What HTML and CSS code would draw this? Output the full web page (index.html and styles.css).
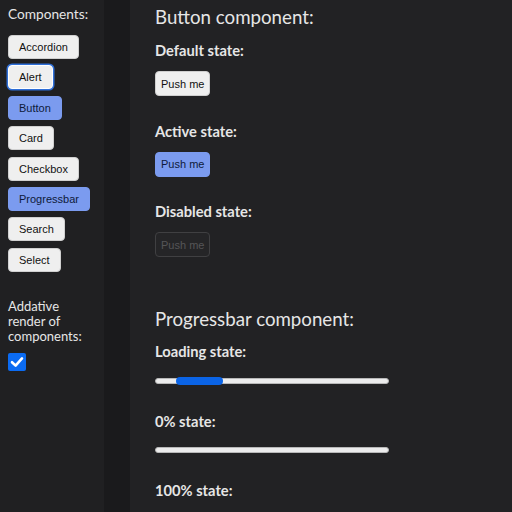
FILE: index.html
```html
<!DOCTYPE html>
<html lang="en">
<head>
<meta charset="utf-8">
<title>Components</title>
<link rel="stylesheet" href="styles.css">
</head>
<body>
<div class="app">
  <aside class="sidebar">
    <h1 class="side-title">Components:</h1>
    <nav class="side-list">
      <button class="nav-btn">Accordion</button>
      <button class="nav-btn focused">Alert</button>
      <button class="nav-btn selected">Button</button>
      <button class="nav-btn">Card</button>
      <button class="nav-btn">Checkbox</button>
      <button class="nav-btn selected">Progressbar</button>
      <button class="nav-btn">Search</button>
      <button class="nav-btn">Select</button>
    </nav>
    <p class="side-note">Addative render of components:</p>
    <label class="check">
      <input type="checkbox" checked class="check-input">
      <span class="check-box">
        <svg viewBox="0 0 18 18" width="18" height="18" aria-hidden="true"><path d="M4 9.2 L7.6 12.6 L14 5.4" fill="none" stroke="#fff" stroke-width="2.6" stroke-linecap="round" stroke-linejoin="round"/></svg>
      </span>
    </label>
  </aside>
  <div class="gutter"></div>
  <main class="main">
    <section class="component">
      <h2 class="comp-title">Button component:</h2>
      <div class="state">
        <h3 class="state-title">Default state:</h3>
        <button class="demo-btn">Push me</button>
      </div>
      <div class="state">
        <h3 class="state-title">Active state:</h3>
        <button class="demo-btn active">Push me</button>
      </div>
      <div class="state">
        <h3 class="state-title">Disabled state:</h3>
        <button class="demo-btn" disabled>Push me</button>
      </div>
    </section>
    <section class="component progress-comp">
      <h2 class="comp-title">Progressbar component:</h2>
      <div class="pstate">
        <h3 class="state-title">Loading state:</h3>
        <div class="track"><div class="runner"></div></div>
      </div>
      <div class="pstate">
        <h3 class="state-title">0% state:</h3>
        <div class="track"></div>
      </div>
      <div class="pstate">
        <h3 class="state-title">100% state:</h3>
        <div class="track"></div>
      </div>
    </section>
  </main>
</div>
</body>
</html>
```

FILE: styles.css
```css
* { box-sizing: border-box; }
html, body { margin: 0; padding: 0; height: 100%; }
body {
  background: #222224;
  color: #e6e6e6;
  font-family: Lato, "Noto Sans", sans-serif;
  overflow: hidden;
}
.app {
  display: flex;
  height: 512px;
}
.sidebar {
  width: 104px;
  flex: none;
  background: #202022;
  padding: 5px 8px 0 8px;
}
.side-title {
  margin: 0;
  font-size: 13.7px;
  font-weight: 400;
  line-height: 17px;
  color: #e6e6e6;
}
.side-list {
  display: flex;
  flex-direction: column;
  align-items: flex-start;
  gap: 6.4px;
  margin-top: 13px;
}
.nav-btn {
  font-family: "Liberation Sans", Arial, sans-serif;
  font-size: 11px;
  height: 24px;
  padding: 0 10px;
  background: #efefef;
  color: #111;
  border: 1px solid #d0d0d0;
  border-radius: 4px;
}
.nav-btn.selected {
  background: #7b9bef;
  border-color: #7b9bef;
  color: #0e1a3a;
}
.nav-btn.focused {
  border: 1px solid #ffffff;
  box-shadow: 0 0 0 1.5px #2f6fd8;
}
.side-note {
  margin: 27px 0 0 0;
  font-size: 13px;
  line-height: 15px;
  color: #e6e6e6;
}
.check {
  display: block;
  margin-top: 9px;
  width: 18px;
  height: 18px;
}
.check-input {
  position: absolute;
  opacity: 0;
  width: 0;
  height: 0;
  margin: 0;
}
.check-box {
  display: block;
  width: 18px;
  height: 18px;
  background: #0b6bf2;
  border-radius: 2px;
}
.check-box svg { display: block; }
.gutter {
  width: 26px;
  flex: none;
  background: #1a1a1c;
}
.main {
  flex: 1;
  padding: 5px 0 0 25px;
}
.comp-title {
  margin: 0;
  font-size: 18.7px;
  font-weight: 400;
  line-height: 24px;
  color: #e6e6e6;
}
.state-title {
  margin: 0;
  font-size: 14.7px;
  font-weight: 700;
  line-height: 18px;
  color: #e6e6e6;
}
.state { margin-top: 12px; }
.state + .state { margin-top: 25.5px; }
.demo-btn {
  display: block;
  margin-top: 12px;
  font-family: "Liberation Sans", Arial, sans-serif;
  font-size: 11px;
  height: 25px;
  padding: 0 5px;
  background: #efefef;
  color: #111;
  border: 1px solid #cfcfcf;
  border-radius: 4px;
}
.demo-btn.active {
  background: #7b9bef;
  border-color: #7b9bef;
  color: #0e1a3a;
}
.demo-btn:disabled {
  background: #252527;
  border-color: #404042;
  color: #555557;
}
.progress-comp { margin-top: 50px; }
.pstate { margin-top: 11px; }
.pstate + .pstate { margin-top: 28px; }
.track {
  position: relative;
  margin-top: 17.5px;
  width: 234px;
  height: 6px;
  background: #ececec;
  border: 1px solid #b8b8b8;
  border-radius: 3px;
}
.runner {
  position: absolute;
  left: 20px;
  top: -2px;
  width: 47px;
  height: 8px;
  background: #0b64e6;
  border-radius: 4px;
}
```
